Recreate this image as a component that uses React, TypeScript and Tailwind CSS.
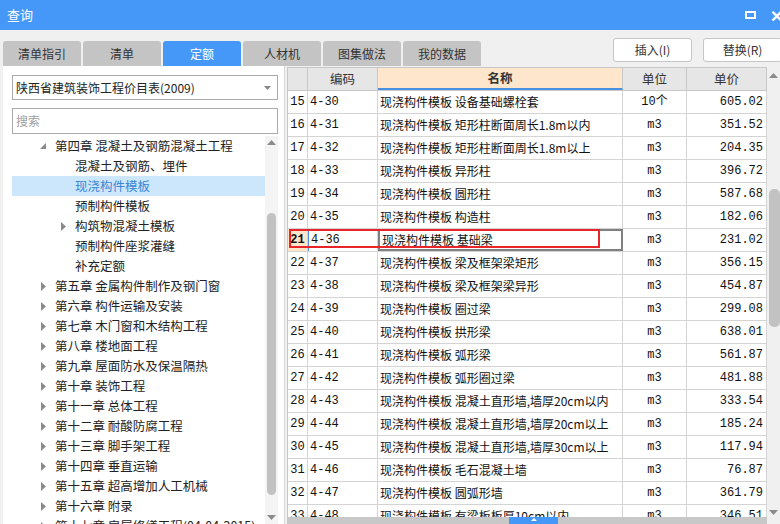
import React from 'react'

const FONT = '"Noto Sans CJK SC", "Noto Sans", sans-serif'
const MONO = '"Liberation Mono", "Noto Sans CJK SC", monospace'

const tabs = ['清单指引', '清单', '定额', '人材机', '图集做法', '我的数据']

type TreeNode = { label: string; level: 0 | 1; arrow?: 'open' | 'closed'; selected?: boolean }

const tree: TreeNode[] = [
  { label: '第四章 混凝土及钢筋混凝土工程', level: 0, arrow: 'open' },
  { label: '混凝土及钢筋、埋件', level: 1 },
  { label: '现浇构件模板', level: 1, selected: true },
  { label: '预制构件模板', level: 1 },
  { label: '构筑物混凝土模板', level: 1, arrow: 'closed' },
  { label: '预制构件座浆灌缝', level: 1 },
  { label: '补充定额', level: 1 },
  { label: '第五章 金属构件制作及钢门窗', level: 0, arrow: 'closed' },
  { label: '第六章 构件运输及安装', level: 0, arrow: 'closed' },
  { label: '第七章 木门窗和木结构工程', level: 0, arrow: 'closed' },
  { label: '第八章 楼地面工程', level: 0, arrow: 'closed' },
  { label: '第九章 屋面防水及保温隔热', level: 0, arrow: 'closed' },
  { label: '第十章 装饰工程', level: 0, arrow: 'closed' },
  { label: '第十一章 总体工程', level: 0, arrow: 'closed' },
  { label: '第十二章 耐酸防腐工程', level: 0, arrow: 'closed' },
  { label: '第十三章 脚手架工程', level: 0, arrow: 'closed' },
  { label: '第十四章 垂直运输', level: 0, arrow: 'closed' },
  { label: '第十五章 超高增加人工机械', level: 0, arrow: 'closed' },
  { label: '第十六章 附录', level: 0, arrow: 'closed' },
  { label: '第十七章 房屋修缮工程(04-04-2015)', level: 0, arrow: 'closed' },
]

const rows: [number, string, string, string, string][] = [
  [15, '4-30', '现浇构件模板 设备基础螺栓套', '10个', '605.02'],
  [16, '4-31', '现浇构件模板 矩形柱断面周长1.8m以内', 'm3', '351.52'],
  [17, '4-32', '现浇构件模板 矩形柱断面周长1.8m以上', 'm3', '204.35'],
  [18, '4-33', '现浇构件模板 异形柱', 'm3', '396.72'],
  [19, '4-34', '现浇构件模板 圆形柱', 'm3', '587.68'],
  [20, '4-35', '现浇构件模板 构造柱', 'm3', '182.06'],
  [21, '4-36', '现浇构件模板 基础梁', 'm3', '231.02'],
  [22, '4-37', '现浇构件模板 梁及框架梁矩形', 'm3', '356.15'],
  [23, '4-38', '现浇构件模板 梁及框架梁异形', 'm3', '454.87'],
  [24, '4-39', '现浇构件模板 圈过梁', 'm3', '299.08'],
  [25, '4-40', '现浇构件模板 拱形梁', 'm3', '638.01'],
  [26, '4-41', '现浇构件模板 弧形梁', 'm3', '561.87'],
  [27, '4-42', '现浇构件模板 弧形圈过梁', 'm3', '481.88'],
  [28, '4-43', '现浇构件模板 混凝土直形墙,墙厚20cm以内', 'm3', '333.54'],
  [29, '4-44', '现浇构件模板 混凝土直形墙,墙厚20cm以上', 'm3', '185.24'],
  [30, '4-45', '现浇构件模板 混凝土直形墙,墙厚30cm以上', 'm3', '117.94'],
  [31, '4-46', '现浇构件模板 毛石混凝土墙', 'm3', '76.87'],
  [32, '4-47', '现浇构件模板 圆弧形墙', 'm3', '361.79'],
  [33, '4-48', '现浇构件模板 有梁板板厚10cm以内', 'm3', '346.51'],
]

function Arrow({ kind }: { kind: 'open' | 'closed' }) {
  if (kind === 'open') {
    return (
      <svg width="7" height="7" viewBox="0 0 7 7">
        <polygon points="6,0 6,6 0,6" fill="#8a8a8a" />
      </svg>
    )
  }
  return (
    <svg width="5" height="9" viewBox="0 0 5 9">
      <polygon points="0,0 5,4.5 0,9" fill="#8a8a8a" />
    </svg>
  )
}

function ScrollArrow({ up }: { up: boolean }) {
  return (
    <svg width="9" height="5" viewBox="0 0 9 5">
      <polygon points={up ? '0,5 4.5,0 9,5' : '0,0 4.5,5 9,0'} fill="#8c8c8c" />
    </svg>
  )
}

export default function App() {
  return (
    <div
      className="relative flex h-[524px] w-[780px] flex-col overflow-hidden bg-[#f0f0f0] text-[#222]"
      style={{ fontFamily: FONT }}
    >
      {/* title bar */}
      <div className="flex h-[30px] shrink-0 items-center justify-between bg-[#4598f8] pl-[7px] text-white">
        <span className="text-[13px]">查询</span>
        <div className="flex items-center gap-[14px]">
          <div className="h-[8px] w-[11px] border-2 border-white" />
          <span className="w-[10px] overflow-hidden text-[16px] font-bold leading-none">✕</span>
        </div>
      </div>

      {/* tab strip + buttons */}
      <div className="flex h-[36px] shrink-0 items-end justify-between pl-[3px]">
        <div className="flex gap-[2px]">
          {tabs.map((t) => (
            <div
              key={t}
              className={
                'flex h-[25px] w-[78px] items-center justify-center rounded-t-[3px] text-[12px] ' +
                (t === '定额' ? 'bg-[#4598f8] text-white' : 'bg-[#c4c4c4] text-[#333]')
              }
            >
              {t}
            </div>
          ))}
        </div>
        <div className="mb-[4px] flex gap-[11px] self-end">
          <button className="h-[24px] w-[79px] rounded-[3px] border border-[#c6c6c6] bg-white text-[12px] text-[#333]">
            插入(I)
          </button>
          <button className="mr-[-2px] h-[24px] w-[79px] rounded-[3px] border border-[#c6c6c6] bg-white text-[12px] text-[#333]">
            替换(R)
          </button>
        </div>
      </div>

      {/* body */}
      <div className="flex min-h-0 flex-1 pl-[3px]">
        {/* left panel */}
        <div className="flex w-[282px] shrink-0 flex-col border-r border-[#d8d8d8] bg-white pl-[9px] pr-[6px] pt-[9px]">
          <div className="flex h-[25px] w-[266px] items-center justify-between border border-[#ababab] pl-[3px] pr-[6px] text-[12px]">
            <span>陕西省建筑装饰工程价目表(2009)</span>
            <svg width="7" height="4" viewBox="0 0 7 4">
              <polygon points="0,0 7,0 3.5,4" fill="#888" />
            </svg>
          </div>
          <div className="mt-[8px] flex h-[26px] w-[266px] items-center border border-[#ababab] pl-[3px] text-[12px] text-[#a0a0a0]">
            搜索
          </div>
          <div className="mt-[2px] flex min-h-0 flex-1">
            <div className="w-[253px] overflow-hidden">
              {tree.map((n) => (
                <div
                  key={n.label}
                  className={
                    'flex h-[20px] items-center whitespace-nowrap text-[12.5px] ' +
                    (n.selected ? 'bg-[#cce6fb] text-[#3a86d6]' : '')
                  }
                >
                  <div
                    className={
                      'flex w-[10px] items-center justify-center ' + (n.level === 0 ? 'ml-[26px]' : 'ml-[46px]')
                    }
                  >
                    {n.arrow && <Arrow kind={n.arrow} />}
                  </div>
                  <span className="ml-[7px]">{n.label}</span>
                </div>
              ))}
            </div>
            <div className="flex w-[13px] flex-col items-center bg-[#f4f4f4] pt-[4px]">
              <ScrollArrow up />
              <div className="mt-[68px] h-[282px] w-[9px] rounded-[5px] bg-[#c2c2c2]" />
              <div className="mt-[20px]">
                <ScrollArrow up={false} />
              </div>
            </div>
          </div>
        </div>

        {/* table */}
        <div className="ml-[2px] flex min-h-0 flex-1 flex-col pt-[1px]">
          <div className="flex min-h-0 flex-1">
            <div className="w-[480px] overflow-hidden border-l border-t border-[#c8c8c8] bg-white">
              <div className="flex h-[23px] border-b border-[#c8c8c8] bg-[#e6e6e6] text-[12.5px] text-[#333]">
                <div className="w-[20px] border-r border-[#c8c8c8]" />
                <div className="flex w-[70px] items-center justify-center border-r border-[#c8c8c8]">编码</div>
                <div className="flex w-[245px] items-center justify-center border-b-2 border-r border-b-[#4a90e2] border-r-[#c8c8c8] bg-[#fde6cb] font-bold">
                  名称
                </div>
                <div className="flex w-[64px] items-center justify-center border-r border-[#c8c8c8]">单位</div>
                <div className="flex w-[80px] items-center justify-center border-r border-[#c8c8c8]">单价</div>
              </div>
              {rows.map(([n, code, name, unit, price]) => {
                const cur = n === 21
                return (
                  <div key={n} className="relative flex h-[23px] border-b border-[#d4d4d4] text-[12px] text-[#111]">
                    <div
                      className={
                        'flex w-[20px] items-center justify-center border-r border-[#d4d4d4] ' +
                        (cur ? 'bg-[#fde6cb] font-bold' : '')
                      }
                      style={{ fontFamily: MONO }}
                    >
                      {n}
                    </div>
                    <div
                      className={
                        'flex w-[70px] items-center border-r border-[#d4d4d4] pl-[2px] ' +
                        (cur ? 'border-l border-l-[#4a90e2]' : '')
                      }
                      style={{ fontFamily: MONO }}
                    >
                      {code}
                    </div>
                    <div
                      className={
                        'flex w-[245px] items-center whitespace-nowrap pl-[2px] ' +
                        (cur ? 'border-2 border-[#808080]' : 'border-r border-[#d4d4d4]')
                      }
                    >
                      {name}
                    </div>
                    <div
                      className="flex w-[64px] items-center justify-center border-r border-[#d4d4d4]"
                      style={{ fontFamily: MONO }}
                    >
                      {unit}
                    </div>
                    <div
                      className="flex w-[80px] items-center justify-end border-r border-[#d4d4d4] pr-[3px]"
                      style={{ fontFamily: MONO }}
                    >
                      {price}
                    </div>
                    {cur && (
                      <div className="absolute left-[1px] top-[0px] h-[19px] w-[311px] border-2 border-[#e8262a]" />
                    )}
                  </div>
                )
              })}
            </div>
            <div className="flex w-[13px] flex-col items-center bg-[#f0f0f0] pt-[6px]">
              <ScrollArrow up />
              <div className="ml-[2px] mt-[111px] h-[138px] w-[11px] rounded-[5px] bg-[#c2c2c2]" />
              <div className="mt-[183px]">
                <ScrollArrow up={false} />
              </div>
            </div>
          </div>
          <div className="flex h-[7px] w-[480px] shrink-0 bg-[#c8c8c8]">
            <div className="ml-[222px] flex h-[7px] w-[49px] items-start justify-center bg-[#4598f8]">
              <svg width="6" height="3" viewBox="0 0 6 3" className="mt-[1px]">
                <polygon points="0,3 3,0 6,3" fill="#fff" />
              </svg>
            </div>
          </div>
        </div>
      </div>
    </div>
  )
}
